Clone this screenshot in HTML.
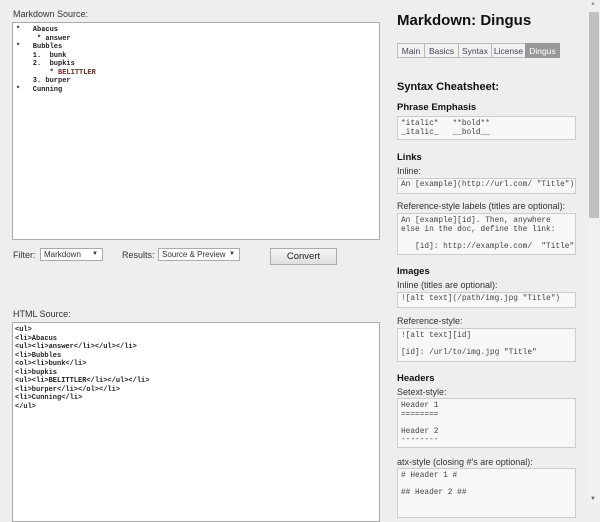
<!DOCTYPE html>
<html><head><style>
body{margin:0;width:600px;height:506px;background:#eeeeee;font-family:"Liberation Sans",sans-serif;position:relative;overflow:hidden;color:#333}
.a{position:absolute}
.lbl{font-size:9px;color:#333}
.ta{position:absolute;background:#fff;border:1px solid #aaa;box-sizing:border-box}
.mono{font-family:"Liberation Mono",monospace;font-size:7px;line-height:8.5px;white-space:pre;color:#222;font-weight:bold}
.pre{position:absolute;left:397px;width:179px;background:#f7f7f7;border:1px solid #ccc;box-sizing:border-box;font-family:"Liberation Mono",monospace;font-size:7.8px;line-height:9px;white-space:pre;padding:3px 3px;color:#444}
.h{position:absolute;left:397px;font-size:9.5px;font-weight:bold;color:#111}
.s{position:absolute;left:397px;font-size:9px;color:#333}
.tab{position:absolute;top:43px;height:15px;font-size:8.5px;line-height:15px;text-align:center;border:1px solid #bbb;box-sizing:border-box;background:#f2f2f2;color:#445}
</style></head><body>
<div class="a lbl" style="left:13px;top:9px">Markdown Source:</div>
<div class="ta" style="left:12px;top:22px;width:368px;height:218px">
<div class="mono a" style="left:3px;top:3px">*   Abacus
     * answer
*   Bubbles
    1.  bunk
    2.  bupkis
        * <span style="color:#822">BELITTLER</span>
    3. burper
*   Cunning</div></div>
<div class="a lbl" style="left:13px;top:250px">Filter:</div>
<div class="a" style="left:40px;top:248px;width:63px;height:13px;background:#fff;border:1px solid #aaa;box-sizing:border-box;font-size:8px;line-height:11px;padding-left:3px">Markdown<span style="position:absolute;right:4px;font-size:6px">▼</span></div>
<div class="a lbl" style="left:122px;top:250px">Results:</div>
<div class="a" style="left:158px;top:248px;width:82px;height:13px;background:#fff;border:1px solid #aaa;box-sizing:border-box;font-size:8px;line-height:11px;padding-left:3px">Source &amp; Preview<span style="position:absolute;right:4px;font-size:6px">▼</span></div>
<div class="a" style="left:270px;top:248px;width:67px;height:17px;background:linear-gradient(#f6f6f6,#dedede);border:1px solid #aaa;box-sizing:border-box;font-size:9.5px;line-height:15px;text-align:center;color:#222">Convert</div>
<div class="a lbl" style="left:13px;top:309px">HTML Source:</div>
<div class="ta" style="left:12px;top:322px;width:368px;height:200px">
<div class="mono a" style="left:2px;top:3px">&lt;ul&gt;
&lt;li&gt;Abacus
&lt;ul&gt;&lt;li&gt;answer&lt;/li&gt;&lt;/ul&gt;&lt;/li&gt;
&lt;li&gt;Bubbles
&lt;ol&gt;&lt;li&gt;bunk&lt;/li&gt;
&lt;li&gt;bupkis
&lt;ul&gt;&lt;li&gt;BELITTLER&lt;/li&gt;&lt;/ul&gt;&lt;/li&gt;
&lt;li&gt;burper&lt;/li&gt;&lt;/ol&gt;&lt;/li&gt;
&lt;li&gt;Cunning&lt;/li&gt;
&lt;/ul&gt;</div></div>

<div class="a" style="left:397px;top:12px;font-size:15px;font-weight:bold;color:#111">Markdown: Dingus</div>
<div class="tab" style="left:397px;width:28px">Main</div>
<div class="tab" style="left:424px;width:35px">Basics</div>
<div class="tab" style="left:458px;width:34px">Syntax</div>
<div class="tab" style="left:491px;width:35px">License</div>
<div class="tab" style="left:525px;width:35px;background:#999;color:#fff;border-color:#999">Dingus</div>
<div class="a" style="left:397px;top:81px;font-size:11px;font-weight:bold;color:#111">Syntax Cheatsheet:</div>
<div class="h" style="top:102px">Phrase Emphasis</div>
<div class="pre" style="top:116px;height:24px">*italic*   **bold**
_italic_   __bold__</div>
<div class="h" style="top:152px">Links</div>
<div class="s" style="top:166px">Inline:</div>
<div class="pre" style="top:178px;height:16px;line-height:9px;padding-top:2px">An [example](http://url.com/ "Title")</div>
<div class="s" style="top:201px">Reference-style labels (titles are optional):</div>
<div class="pre" style="top:213px;height:42px;line-height:8.5px">An [example][id]. Then, anywhere
else in the doc, define the link:

   [id]: http://example.com/  "Title"</div>
<div class="h" style="top:266px">Images</div>
<div class="s" style="top:280px">Inline (titles are optional):</div>
<div class="pre" style="top:292px;height:16px;padding-top:2px">![alt text](/path/img.jpg "Title")</div>
<div class="s" style="top:316px">Reference-style:</div>
<div class="pre" style="top:328px;height:34px;line-height:8.5px">![alt text][id]

[id]: /url/to/img.jpg "Title"</div>
<div class="h" style="top:373px">Headers</div>
<div class="s" style="top:387px">Setext-style:</div>
<div class="pre" style="top:398px;height:50px;line-height:8.5px">Header 1
========

Header 2
--------</div>
<div class="s" style="top:457px">atx-style (closing #'s are optional):</div>
<div class="pre" style="top:468px;height:50px;line-height:8.5px"># Header 1 #

## Header 2 ##</div>

<div class="a" style="left:588px;top:0;width:12px;height:506px;background:#f0f0f0"></div>
<div class="a" style="left:589px;top:12px;width:10px;height:206px;background:#c1c1c1"></div>
<div class="a" style="left:590px;top:1px;font-size:6px;color:#999">▲</div>
<div class="a" style="left:590px;top:496px;font-size:6px;color:#666">▼</div>
</body></html>
